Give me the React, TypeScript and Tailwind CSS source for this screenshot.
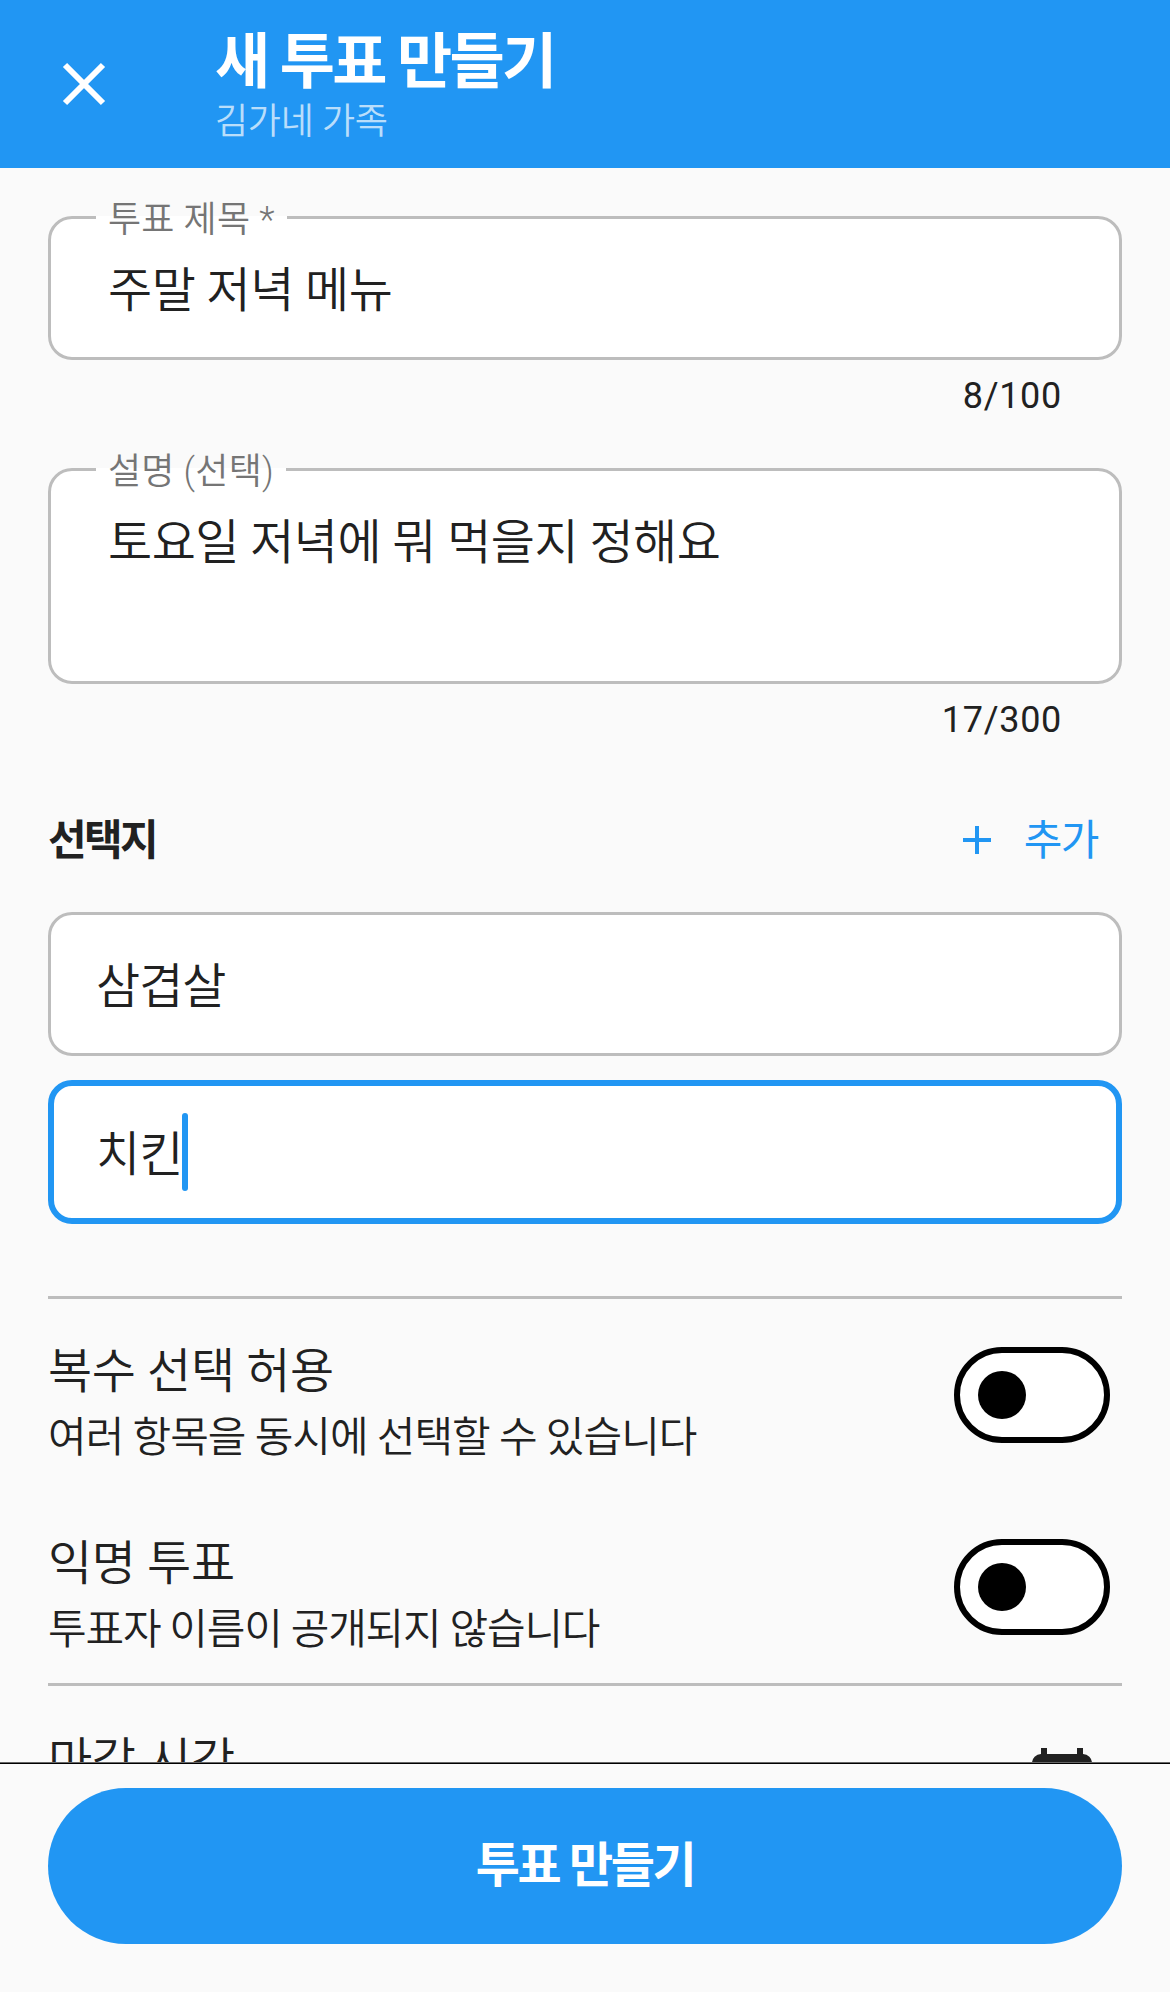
import React from "react";

function Outlined({ label, value, h, counter }: { label: string; value: string; h: string; counter: string }) {
  return (
    <div className="flex flex-col shrink-0">
      <fieldset className={`border-[3px] border-[#bdbdbd] rounded-[24px] bg-white px-[57px] ${h}`}>
        <legend className="ml-[-12px] px-[12px] h-[3px] leading-[8px] text-[36px] font-[350] tracking-[0.2px] text-[#757575] whitespace-nowrap">{label}</legend>
        <div className="pt-[47px] text-[48px] leading-[50px] font-[350] tracking-[-0.5px] text-[#212121]">{value}</div>
      </fieldset>
      <div className="h-[36px] mt-[18px] pr-[60px] text-right text-[36px] leading-[36px] font-normal tracking-[0.7px] text-[#212121]">{counter}</div>
    </div>
  );
}

function Toggle() {
  return (
    <div className="w-[156px] h-[96px] rounded-full border-[6px] border-black bg-white flex items-center pl-[18px] shrink-0">
      <div className="w-[48px] h-[48px] rounded-full bg-black" />
    </div>
  );
}

function SwitchRow({ title, sub, subTracking }: { title: string; sub: string; subTracking: string }) {
  return (
    <div className="flex items-center justify-between h-[192px] shrink-0 pr-[12px]">
      <div className="flex flex-col pt-[16px]">
        <div className="text-[48px] leading-[66px] font-[350] tracking-[-0.3px] text-[#212121]">{title}</div>
        <div className={`text-[42px] leading-[60px] mt-[3px] font-[350] text-[#212121] ${subTracking}`}>{sub}</div>
      </div>
      <Toggle />
    </div>
  );
}

export default function App() {
  return (
    <div className="w-[1170px] h-[1992px] flex flex-col overflow-hidden bg-[#fafafa] font-['Roboto','Noto_Sans_CJK_KR',sans-serif]">
      <header className="h-[168px] shrink-0 bg-[#2196f3] flex items-center">
        <div className="w-[215px] flex justify-start pl-[60px]">
          <svg width="48" height="48" viewBox="0 0 48 48" fill="none" stroke="white" strokeWidth="6">
            <path d="M5 5L43 43M43 5L5 43" />
          </svg>
        </div>
        <div className="flex flex-col">
          <div className="text-[60px] leading-[76px] font-bold tracking-[-2.7px] text-white">새 투표 만들기</div>
          <div className="text-[36px] leading-[42px] font-[350] tracking-[-0.3px] text-white/70">김가네 가족</div>
        </div>
      </header>

      <main className="flex-1 min-h-0 overflow-hidden px-[48px] pt-[48px] flex flex-col">
        <Outlined label="투표 제목 *" value="주말 저녁 메뉴" h="h-[144px]" counter="8/100" />
        <div className="h-[54px] shrink-0" />
        <Outlined label="설명 (선택)" value="토요일 저녁에 뭐 먹을지 정해요" h="h-[216px]" counter="17/300" />
        <div className="flex items-center justify-between mt-[72px] h-[60px] shrink-0">
          <div className="text-[42px] font-bold tracking-[-2.6px] text-[#212121]">선택지</div>
          <div className="flex items-center gap-[32px] pr-[24px] text-[#2196f3]">
            <svg width="30" height="30" viewBox="0 0 30 30" stroke="#2196f3" strokeWidth="4" fill="none">
              <path d="M15 1V29M1 15H29" />
            </svg>
            <span className="text-[42px] tracking-[-1.5px]">추가</span>
          </div>
        </div>
        <div className="mt-[42px] h-[144px] shrink-0 rounded-[24px] border-[3px] border-[#bdbdbd] bg-white flex items-center pl-[45px] pt-[5px] text-[48px] font-[350] tracking-[-1px] text-[#212121]">
          삼겹살
        </div>
        <div className="mt-[24px] h-[144px] shrink-0 rounded-[24px] border-[6px] border-[#2196f3] bg-white flex items-center pl-[42px] text-[48px] font-[350] tracking-[-1px] text-[#212121]">
          <span className="pt-[5px]">치킨</span>
          <div className="w-[6px] h-[78px] rounded-full bg-[#2196f3]" />
        </div>
        <div className="mt-[72px] h-[3px] shrink-0 bg-[#bdbdbd]" />
        <SwitchRow title="복수 선택 허용" sub="여러 항목을 동시에 선택할 수 있습니다" subTracking="tracking-[-1px]" />
        <SwitchRow title="익명 투표" sub="투표자 이름이 공개되지 않습니다" subTracking="tracking-[-1.2px]" />
        <div className="h-[3px] shrink-0 bg-[#bdbdbd]" />
        <div className="flex items-start justify-between mt-[42px] pr-[30px] shrink-0">
          <div className="text-[48px] leading-[66px] font-[350] tracking-[-0.3px] text-[#212121]">마감 시간</div>
          <svg className="mt-[20px]" width="60" height="72" viewBox="0 0 60 72" fill="#212121">
            <path d="M9 0h6v6h30V0h6v6h0a9 9 0 0 1 9 9v57H0V15a9 9 0 0 1 9-9z" />
          </svg>
        </div>
      </main>

      <footer className="h-[230px] shrink-0 bg-[#fafafa] flex flex-col">
        <div className="h-px bg-[#666666]" />
        <div className="h-px bg-black" />
        <div className="px-[48px] pt-[24px]">
          <div className="h-[156px] rounded-full bg-[#2196f3] flex items-center justify-center text-[48px] font-bold tracking-[-2.4px] text-white">
            투표 만들기
          </div>
        </div>
      </footer>
    </div>
  );
}
